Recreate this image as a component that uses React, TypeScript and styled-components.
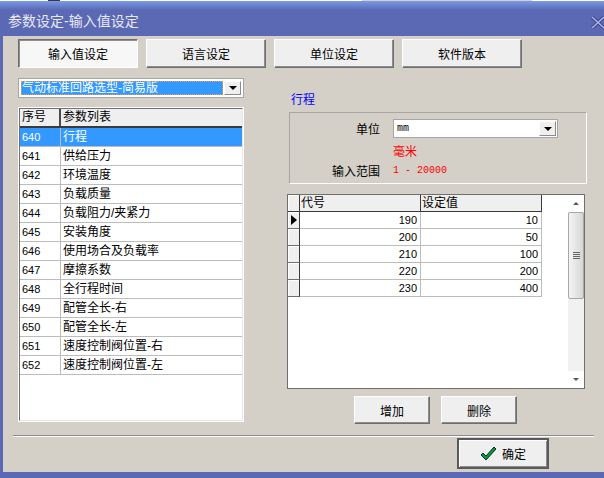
import styled, {createGlobalStyle} from 'styled-components';

const GlobalStyle = createGlobalStyle`
  html, body {
    margin: 0;
    padding: 0;
    background: #d4d0c8;
  }
  * {
    box-sizing: border-box;
  }
`
const Page = styled.div`
  width: 604px;
  height: 478px;
  overflow: hidden;
  display: flex;
  flex-direction: column;
  background: #5b69b5;
  font-family: "Liberation Sans", "Noto Sans CJK SC", sans-serif;
  font-size: 12px;
  color: #000;
`
const TopStrip = styled.div`
  height: 1px;
  flex: none;
  background: linear-gradient(90deg, #ffffff 0 8%, #3a3a3a 8% 10%, #ffffff 10% 60%, #d4d0c8 60% 88%, #ffffff 88%);
`
const TitleBar = styled.div`
  height: 35px;
  flex: none;
  display: flex;
  align-items: center;
  justify-content: space-between;
  padding: 3px 0 0 8px;
  background: linear-gradient(180deg, #7b9ae6 0, #5b69b5 9px);
  color: #e8e8f4;
  font-size: 14px;
`
const CloseIcon = styled.svg`
  width: 13px;
  height: 13px;
  margin-top: 4px;
  flex: none;
`
const Client = styled.div`
  width: 601px;
  height: 436px;
  margin-left: 3px;
  flex: none;
  background: #d4d0c8;
  padding: 3px 0 0 15px;
`
const Tabs = styled.div`
  display: flex;
  gap: 8px;
`
const Raised = styled.button<{$active?: boolean}>`
  padding: 0;
  font: inherit;
  color: #000;
  display: flex;
  align-items: center;
  justify-content: center;
  gap: 5px;
  background: ${p => p.$active ? '#f7f7f7' : '#efefef'};
  border: 1px solid;
  border-color: #fff #6f6f6f #6f6f6f #fff;
  box-shadow: inset -1px -1px 0 #8c8c8c;
`
const TabButton = styled(Raised)`
  width: 120px;
  height: 29px;
  ${p => p.$active && `
    border-color: #6f6f6f #fff #fff #6f6f6f;
    box-shadow: inset 1px 1px 0 #8c8c8c;
  `}
`
const Columns = styled.div`
  display: flex;
  margin-top: 10px;
`
const LeftColumn = styled.div`
  width: 226px;
  flex: none;
`
const Combo = styled.div`
  height: 20px;
  display: flex;
  align-items: stretch;
  gap: 1px;
  padding: 2px;
  background: #fff;
  border: 1px solid #a6a6a6;
`
const ComboValue = styled.div<{$selected?: boolean}>`
  flex: 1;
  line-height: 14px;
  padding-left: 1px;
  white-space: nowrap;
  overflow: hidden;
  ${p => p.$selected ? `
    background: #3399ff;
    color: #fff;
    outline: 1px dotted #ff9b2e;
    outline-offset: -1px;
  ` : ''}
`
const ComboArrow = styled.div`
  width: 17px;
  flex: none;
  display: flex;
  align-items: center;
  justify-content: center;
  background: #efefef;
  border: 1px solid;
  border-color: #fff #8c8c8c #8c8c8c #fff;
  &::after {
    content: "";
    border-style: solid;
    border-width: 4px 4px 0;
    border-color: #000 transparent transparent;
  }
`
const ListBox = styled.div`
  margin-top: 9px;
  height: 315px;
  background: #fff;
  border: 2px solid;
  border-color: #6f6f6f #e8e8e8 #e8e8e8 #6f6f6f;
  outline: 1px solid #fff;
  outline-offset: -1px;
`
const ListHeader = styled.div`
  display: flex;
  height: 19px;
  background: #efefef;
  border-bottom: 2px solid #3a3a3a;
`
const ListHeadCell = styled.div<{$w?: number}>`
  ${p => p.$w ? `width: ${p.$w}px; flex: none;` : 'flex: 1;'}
  padding-left: 2px;
  line-height: 17px;
  ${p => p.$w ? 'border-right: 2px solid #4a4a4a;' : ''}
`
const ListRow = styled.div<{$selected?: boolean}>`
  display: flex;
  height: 19px;
  border-bottom: 1px solid #bcbcbc;
  background: ${p => p.$selected ? '#3399ff' : '#fff'};
  color: ${p => p.$selected ? '#fff' : '#000'};
`
const ListNum = styled.div`
  width: 41px;
  flex: none;
  padding-left: 2px;
  line-height: 18px;
  font-size: 11px;
  border-right: 1px solid #bcbcbc;
`
const ListName = styled.div`
  flex: 1;
  padding-left: 2px;
  line-height: 18px;
`
const RightColumn = styled.div`
  width: 298px;
  flex: none;
  margin-left: 43px;
  padding-top: 15px;
`
const Heading = styled.div`
  color: #0000ff;
  line-height: 14px;
  padding-left: 4px;
`
const GroupBox = styled.div`
  margin: 5px 0 0 2px;
  width: 298px;
  height: 72px;
  border: 1px solid;
  border-color: #a6a6a6 #fff #fff #a6a6a6;
  display: grid;
  grid-template-columns: 91px 165px;
  grid-template-rows: 21px 22px 18px;
  column-gap: 12px;
  padding-top: 5px;
  align-items: center;
`
const FieldLabel = styled.div`
  text-align: right;
  padding-right: 1px;
`
const RedText = styled.div`
  color: #ff0000;
`
const RangeText = styled(RedText)`
  font-family: "Liberation Mono", monospace;
  font-size: 10px;
`
const UnitCombo = styled(Combo)`
  height: 19px;
  width: 165px;
  padding: 1px;
`
const UnitValue = styled(ComboValue)`
  font-family: "Liberation Mono", monospace;
  font-size: 10px;
  padding-left: 2px;
  line-height: 16px;
`
const GridFrame = styled.div`
  margin-top: 10px;
  width: 298px;
  height: 195px;
  background: #fff;
  border: 1px solid #6f6f6f;
  display: flex;
`
const GridBody = styled.div`
  flex: 1;
`
const GridRow = styled.div`
  display: flex;
  height: 17px;
`
const IndicatorCell = styled.div<{$head?: boolean}>`
  width: 12px;
  flex: none;
  display: flex;
  align-items: center;
  padding-left: 3px;
  background: #efefef;
  border-bottom: 1px solid ${p => p.$head ? '#3a3a3a' : '#6f6f6f'};
  border-right: 1px solid #3a3a3a;
  box-shadow: inset 1px 1px 0 #fff;
`
const Pointer = styled.div`
  border-style: solid;
  border-width: 5px 0 5px 6px;
  border-color: transparent transparent transparent #000;
`
const GridHead = styled.div`
  width: 121px;
  flex: none;
  padding-left: 1px;
  line-height: 16px;
  background: #efefef;
  border-bottom: 1px solid #3a3a3a;
  border-right: 1px solid #3a3a3a;
`
const GridCell = styled.div`
  width: 121px;
  flex: none;
  padding-right: 3px;
  text-align: right;
  line-height: 16px;
  font-size: 11px;
  border-bottom: 1px solid #bcbcbc;
  border-right: 1px solid #bcbcbc;
`
const ScrollBar = styled.div`
  width: 16px;
  flex: none;
  display: flex;
  flex-direction: column;
  background: #f1f1f1;
`
const ScrollArrow = styled.div<{$up?: boolean}>`
  height: 17px;
  flex: none;
  display: flex;
  align-items: center;
  justify-content: center;
  background: #fff;
  &::after {
    content: "";
    border-style: solid;
    border-width: ${p => p.$up ? '0 3px 3px' : '3px 3px 0'};
    border-color: ${p => p.$up
      ? 'transparent transparent #555'
      : '#555 transparent transparent'};
  }
`
const ScrollThumb = styled.div`
  height: 87px;
  flex: none;
  display: flex;
  align-items: center;
  justify-content: center;
  background: linear-gradient(90deg, #f4f4f4, #d6d6d6);
  border: 1px solid #a8a8a8;
  border-radius: 2px;
`
const ThumbGrip = styled.div`
  width: 7px;
  height: 7px;
  background: repeating-linear-gradient(180deg, #666 0 1px, transparent 1px 2px);
`
const ScrollRest = styled.div`
  flex: 1;
`
const GridActions = styled.div`
  display: flex;
  gap: 11px;
  margin: 7px 0 0 67px;
`
const ActionButton = styled(Raised)`
  width: 76px;
  height: 28px;
`
const Divider = styled.div`
  margin-top: 11px;
  margin-left: -5px;
  width: 581px;
  height: 2px;
  background: #fff;
  border-top: 1px solid #8c8c8c;
`
const Footer = styled.div`
  display: flex;
  margin: 1px 0 0 439px;
`
const OkButton = styled(Raised)`
  width: 92px;
  height: 31px;
  border: 2px solid;
  border-color: #5a5a5a;
  box-shadow: inset 1px 1px 0 #fff, inset -1px -1px 0 #8c8c8c;
`
const CheckIcon = styled.svg`
  width: 17px;
  height: 15px;
  flex: none;
`

const params = [
  ['640', '行程'],
  ['641', '供给压力'],
  ['642', '环境温度'],
  ['643', '负载质量'],
  ['644', '负载阻力/夹紧力'],
  ['645', '安装角度'],
  ['646', '使用场合及负载率'],
  ['647', '摩擦系数'],
  ['648', '全行程时间'],
  ['649', '配管全长-右'],
  ['650', '配管全长-左'],
  ['651', '速度控制阀位置-右'],
  ['652', '速度控制阀位置-左'],
]
const values = [
  ['190', '10'],
  ['200', '50'],
  ['210', '100'],
  ['220', '200'],
  ['230', '400'],
]
const tabs = ['输入值设定', '语言设定', '单位设定', '软件版本']

export default function App() {
  return (
    <Page>
      <GlobalStyle/>
      <TopStrip/>
      <TitleBar>
        <span>参数设定-输入值设定</span>
        <CloseIcon viewBox="0 0 13 13">
          <path d="M1 1L13 12M13 1L1 12" stroke="#3f4a8e" strokeWidth="3.5"/>
          <path d="M1 1L13 12M13 1L1 12" stroke="#aab4e4" strokeWidth="1.5"/>
        </CloseIcon>
      </TitleBar>
      <Client>
        <Tabs>
          {tabs.map((t, i) => <TabButton key={t} $active={i === 0}>{t}</TabButton>)}
        </Tabs>
        <Columns>
          <LeftColumn>
            <Combo>
              <ComboValue $selected>气动标准回路选型-简易版</ComboValue>
              <ComboArrow/>
            </Combo>
            <ListBox>
              <ListHeader>
                <ListHeadCell $w={41}>序号</ListHeadCell>
                <ListHeadCell>参数列表</ListHeadCell>
              </ListHeader>
              {params.map((r, i) => (
                <ListRow key={r[0]} $selected={i === 0}>
                  <ListNum>{r[0]}</ListNum>
                  <ListName>{r[1]}</ListName>
                </ListRow>
              ))}
            </ListBox>
          </LeftColumn>
          <RightColumn>
            <Heading>行程</Heading>
            <GroupBox>
              <FieldLabel>单位</FieldLabel>
              <UnitCombo>
                <UnitValue>mm</UnitValue>
                <ComboArrow/>
              </UnitCombo>
              <span/>
              <RedText>毫米</RedText>
              <FieldLabel>输入范围</FieldLabel>
              <RangeText>1 - 20000</RangeText>
            </GroupBox>
            <GridFrame>
              <GridBody>
                <GridRow>
                  <IndicatorCell $head/>
                  <GridHead>代号</GridHead>
                  <GridHead>设定值</GridHead>
                </GridRow>
                {values.map((r, i) => (
                  <GridRow key={r[0]}>
                    <IndicatorCell>{i === 0 && <Pointer/>}</IndicatorCell>
                    <GridCell>{r[0]}</GridCell>
                    <GridCell>{r[1]}</GridCell>
                  </GridRow>
                ))}
              </GridBody>
              <ScrollBar>
                <ScrollArrow $up/>
                <ScrollThumb><ThumbGrip/></ScrollThumb>
                <ScrollRest/>
                <ScrollArrow/>
              </ScrollBar>
            </GridFrame>
            <GridActions>
              <ActionButton>增加</ActionButton>
              <ActionButton>删除</ActionButton>
            </GridActions>
          </RightColumn>
        </Columns>
        <Divider/>
        <Footer>
          <OkButton>
            <CheckIcon viewBox="0 0 17 15">
              <path d="M1 9L3 7L6 10L14 1L16 3L6 14Z" fill="#0a9a1a" stroke="#002a50" strokeWidth="1"/>
            </CheckIcon>
            确定
          </OkButton>
        </Footer>
      </Client>
    </Page>
  );
}
